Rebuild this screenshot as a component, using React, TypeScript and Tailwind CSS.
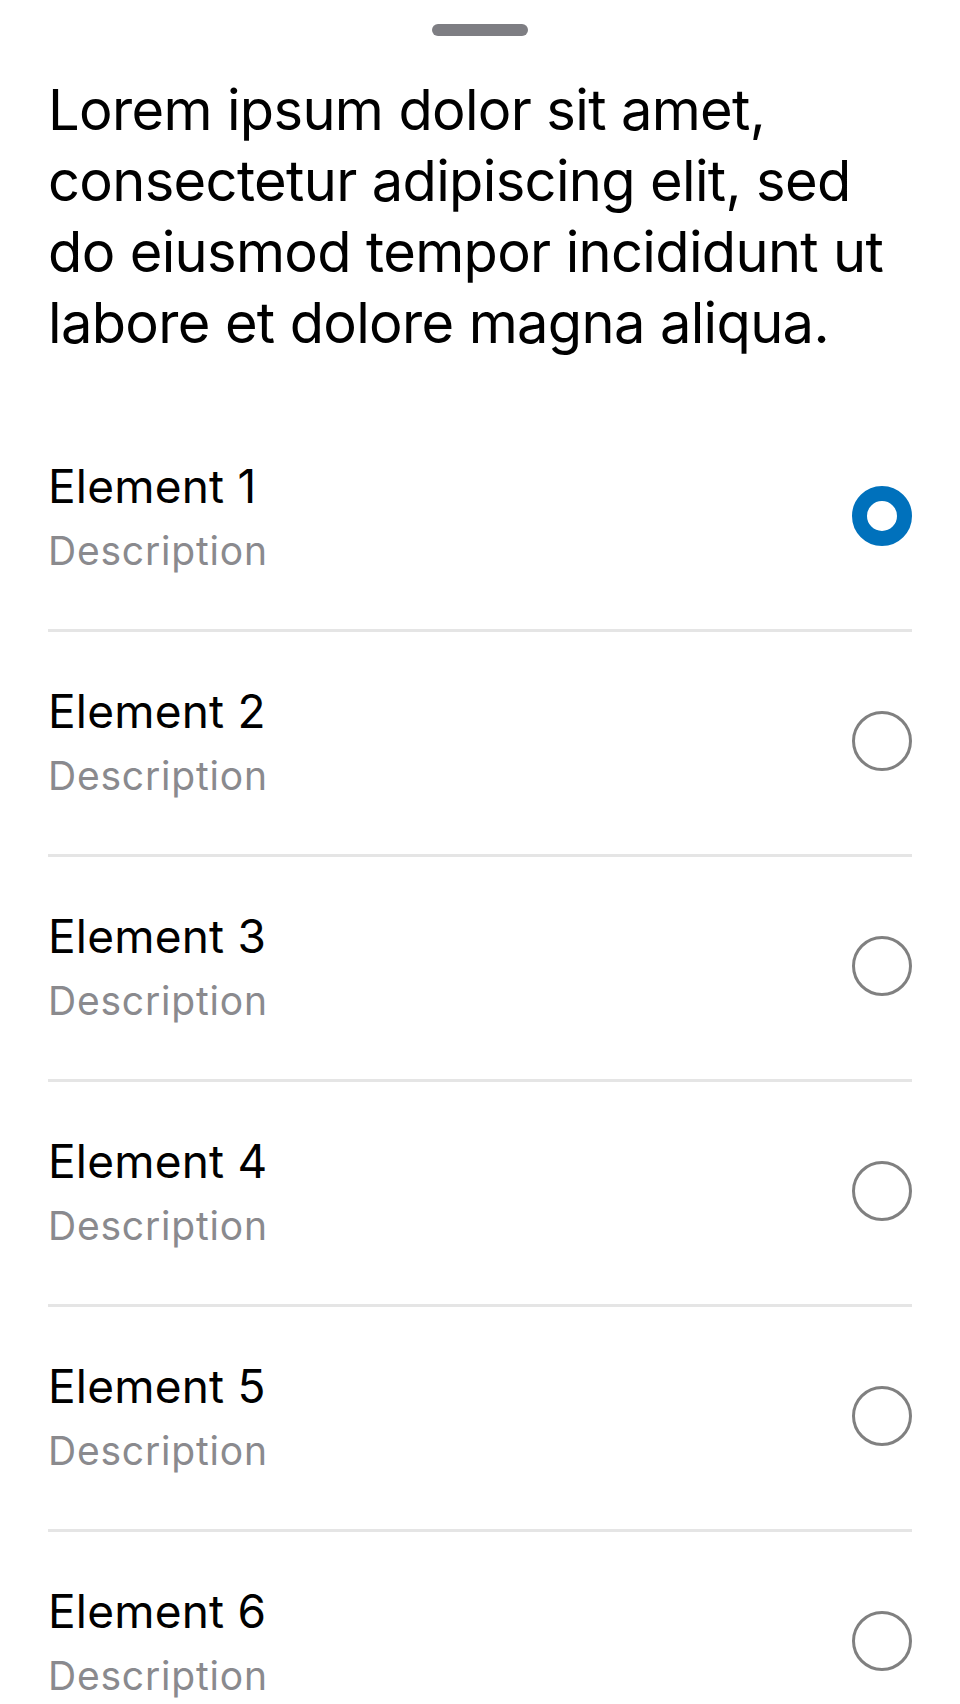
import React from "react";

const items = [1, 2, 3, 4, 5, 6];

function Radio({ selected }: { selected: boolean }) {
  return selected ? (
    <div className="h-[60px] w-[60px] shrink-0 rounded-full border-[15px] border-[#0071bc]" />
  ) : (
    <div className="h-[60px] w-[60px] shrink-0 rounded-full border-[3px] border-[#808080]" />
  );
}

export default function App() {
  const lines = [
    "Lorem ipsum dolor sit amet,",
    "consectetur adipiscing elit, sed",
    "do eiusmod tempor incididunt ut",
    "labore et dolore magna aliqua.",
  ];
  return (
    <div className="min-h-[1704px] w-[960px] overflow-hidden bg-white font-['Inter','Liberation_Sans',sans-serif] text-black">
      <div className="flex justify-center pt-[24px]">
        <div className="h-[12px] w-[96px] rounded-full bg-[#7e7e83]" />
      </div>
      <div className="px-[48px] pt-[39px]">
        <h1 className="text-[56px] leading-[71px] font-normal tracking-[-0.65px]">
          {lines.map((l) => (
            <span key={l} className="block whitespace-nowrap">
              {l}
            </span>
          ))}
        </h1>
        <div className="mt-[48px]">
          {items.map((n, i) => (
            <div key={n}>
              {i > 0 && <div className="h-[3px] bg-[#e5e5e5]" />}
              <div className="flex items-center justify-between pt-[51px] pb-[56px]">
                <div className="flex flex-col">
                  <span className="text-[46px] leading-[56px] tracking-[0.2px]">Element {n}</span>
                  <span className="mt-[14px] text-[39px] leading-[45px] tracking-[0.8px] text-[#8a8a8e]">
                    Description
                  </span>
                </div>
                <Radio selected={i === 0} />
              </div>
            </div>
          ))}
        </div>
      </div>
    </div>
  );
}
